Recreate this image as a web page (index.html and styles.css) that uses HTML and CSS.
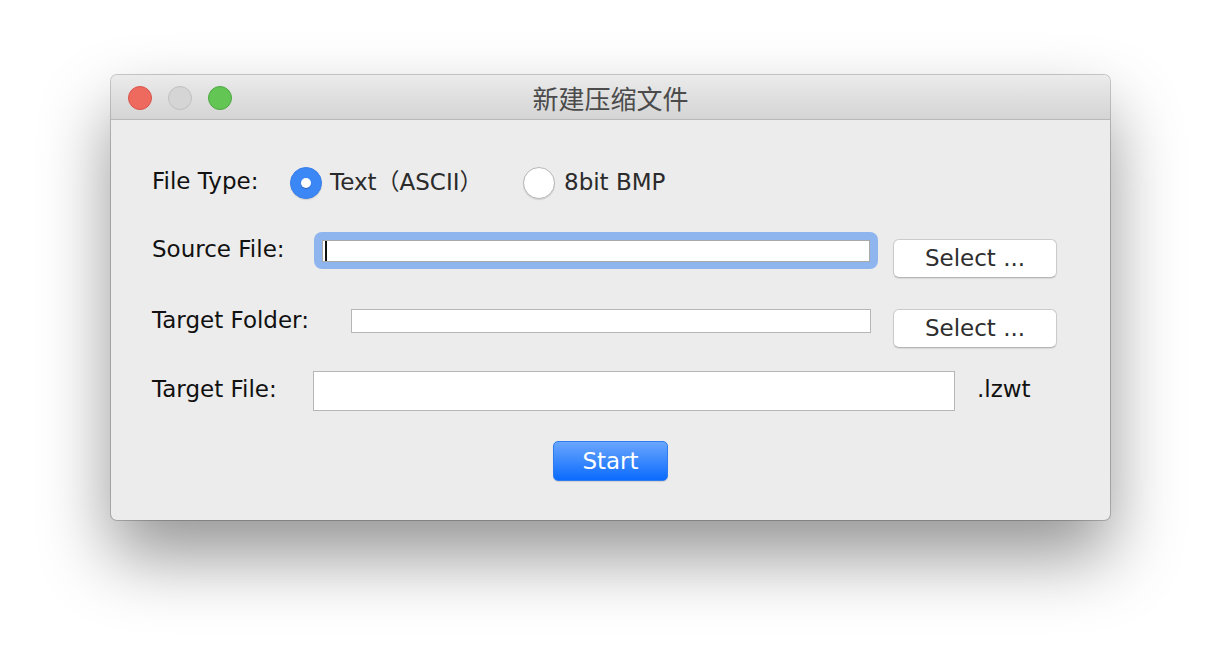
FILE: index.html
```html
<!DOCTYPE html>
<html lang="zh">
<head>
<meta charset="utf-8">
<title>新建压缩文件</title>
<link rel="stylesheet" href="styles.css">
</head>
<body>
<div class="window">
  <div class="titlebar">
    <div class="lights">
      <span class="light red"></span>
      <span class="light gray"></span>
      <span class="light green"></span>
    </div>
    <div class="title">新建压缩文件</div>
    <div class="spacer"></div>
  </div>
  <div class="content">
    <div class="row row-type">
      <span class="label label-type">File Type:</span>
      <label class="option option-text"><span class="radio checked"></span><span class="opt-text">Text（ASCII）</span></label>
      <label class="option option-bmp"><span class="radio"></span><span class="opt-text">8bit BMP</span></label>
    </div>
    <div class="row row-source">
      <span class="label label-source">Source File:</span>
      <div class="focus-ring"><div class="field field-focus"><span class="caret"></span></div></div>
      <button class="btn btn-select btn-source">Select ...</button>
    </div>
    <div class="row row-folder">
      <span class="label label-folder">Target Folder:</span>
      <div class="field field-folder"></div>
      <button class="btn btn-select btn-folder">Select ...</button>
    </div>
    <div class="row row-target">
      <span class="label label-target">Target File:</span>
      <div class="field field-target"></div>
      <span class="label ext">.lzwt</span>
    </div>
    <div class="row row-start">
      <button class="btn btn-start">Start</button>
    </div>
  </div>
</div>
</body>
</html>
```
FILE: styles.css
```css
html, body {
  margin: 0;
  padding: 0;
}
body {
  width: 1222px;
  height: 668px;
  background: #ffffff;
  font-family: "DejaVu Sans", "Noto Sans CJK SC", sans-serif;
  padding: 75px 0 0 111px;
  box-sizing: border-box;
  overflow: hidden;
}
.window {
  width: 999px;
  height: 445px;
  border-radius: 6px;
  background: #ececec;
  box-shadow: 0 0 0 1px rgba(0,0,0,0.2), 0 36px 70px rgba(0,0,0,0.42);
  overflow: hidden;
  display: flex;
  flex-direction: column;
}
.titlebar {
  height: 44px;
  border-bottom: 1px solid #b9b9b9;
  background: linear-gradient(#ebebeb, #d4d4d4);
  display: grid;
  grid-template-columns: 1fr auto 1fr;
  align-items: center;
  flex: none;
}
.lights {
  display: flex;
  gap: 16px;
  padding-left: 17px;
  margin-top: 1px;
}
.light {
  width: 22px;
  height: 22px;
  border-radius: 50%;
  border: 1px solid transparent;
}
.light.red { background: #ee6a5f; border-color: #d8544b; }
.light.gray { background: #d5d5d5; border-color: #c0c0c0; }
.light.green { background: #62c554; border-color: #4ea843; }
.title {
  font-family: "Noto Sans CJK SC", sans-serif;
  font-size: 26px;
  line-height: 30px;
  color: #4b4b4b;
  margin-top: 2px;
}
.content {
  flex: 1;
  padding: 0 41px;
  display: flex;
  flex-direction: column;
}
.row {
  display: flex;
  align-items: flex-start;
}
.label {
  font-size: 23px;
  line-height: 27px;
  color: #111;
  white-space: nowrap;
  flex: none;
}
/* Row 1 */
.row-type {
  margin-top: 43px;
  height: 40px;
}
.label-type { width: 138px; margin-top: 5px; }
.option {
  display: flex;
  align-items: flex-start;
  flex: none;
}
.option-text { width: 233px; gap: 8px; }
.option-bmp { gap: 9px; }
.opt-text {
  font-size: 23px;
  line-height: 27px;
  color: #2b2b2b;
  margin-top: 6px;
  white-space: nowrap;
}
.radio {
  width: 32px;
  height: 32px;
  border-radius: 50%;
  box-sizing: border-box;
  margin-top: 4px;
  background: #fff;
  border: 1px solid #b8b8b8;
  box-shadow: 0 1px 1px rgba(0,0,0,0.12);
  display: flex;
  align-items: center;
  justify-content: center;
  flex: none;
}
.radio.checked {
  background: #3c87f6;
  border-color: #3a80ea;
}
.radio.checked::after {
  content: "";
  width: 10px;
  height: 10px;
  border-radius: 50%;
  background: #fff;
  box-shadow: 0 1px 1px rgba(0,0,0,0.25);
}
/* Row 2 */
.row-source { margin-top: 29px; height: 47px; }
.label-source { width: 162px; margin-top: 4px; }
.focus-ring {
  width: 564px;
  height: 37px;
  box-sizing: border-box;
  padding: 8px 8px 7px 8px;
  border-radius: 8px;
  background: #8fb5ee;
  flex: none;
}
.field {
  background: #fff;
  border: 1px solid #b6b6b6;
  box-sizing: border-box;
  flex: none;
}
.field-focus {
  height: 22px;
  border-color: #a9a9a9;
  position: relative;
}
.caret {
  position: absolute;
  left: 2px;
  top: 0;
  width: 2px;
  height: 20px;
  background: #111;
}
.btn {
  font-family: "DejaVu Sans", sans-serif;
  font-size: 23px;
  line-height: 27px;
  padding: 0;
  box-sizing: border-box;
  flex: none;
  cursor: default;
}
.btn-select {
  width: 164px;
  height: 39px;
  margin-left: 15px;
  margin-top: 7px;
  background: #fff;
  color: #2e2e2e;
  border: 1px solid #cbcbcb;
  border-bottom-color: #b5b5b5;
  border-radius: 6px;
  box-shadow: 0 1px 1px rgba(0,0,0,0.08);
}
/* Row 3 */
.row-folder { margin-top: 30px; height: 40px; }
.label-folder { width: 199px; margin-top: -2px; }
.field-folder { width: 520px; height: 24px; }
.btn-folder { margin-left: 22px; margin-top: 0; }
/* Row 4 */
.row-target { margin-top: 22px; height: 40px; }
.label-target { width: 161px; margin-top: 5px; }
.field-target { width: 642px; height: 40px; }
.ext { margin-left: 22px; margin-top: 5px; }
/* Start */
.row-start {
  margin-top: 30px;
  justify-content: center;
}
.btn-start {
  width: 115px;
  height: 40px;
  color: #fff;
  border: 1px solid #2f7cf0;
  border-radius: 5px;
  background: linear-gradient(#6aa6fd, #0b6bfd);
  box-shadow: 0 1px 1px rgba(0,0,0,0.12);
}
```
